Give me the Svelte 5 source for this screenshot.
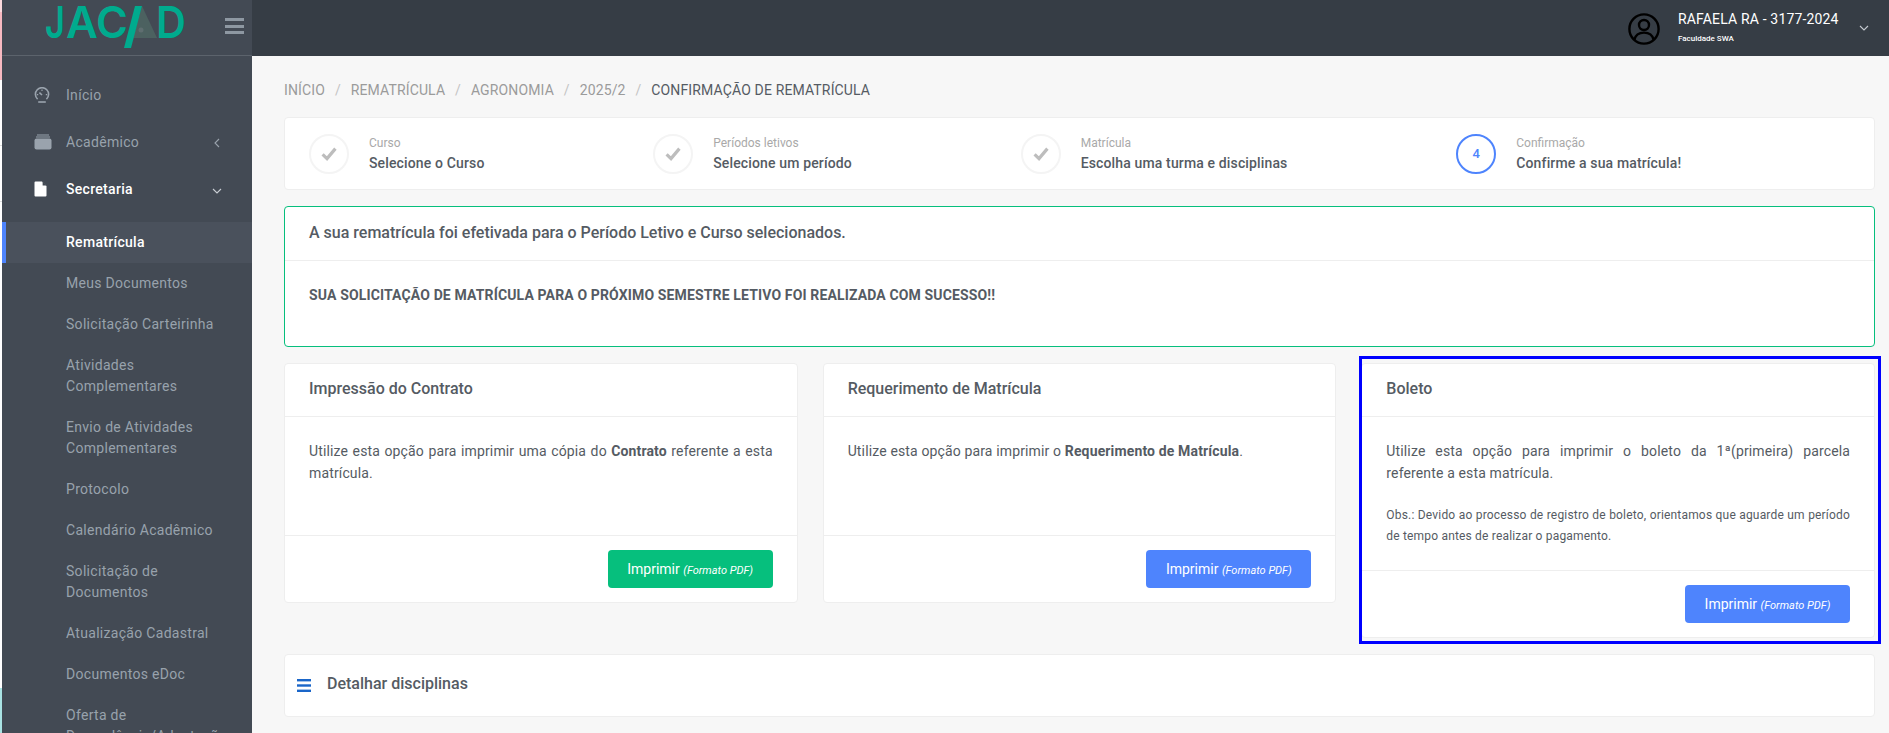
<script>
  const subItems = [
    'Meus Documentos',
    'Solicitação Carteirinha',
    'Atividades Complementares',
    'Envio de Atividades Complementares',
    'Protocolo',
    'Calendário Acadêmico',
    'Solicitação de Documentos',
    'Atualização Cadastral',
    'Documentos eDoc',
    'Oferta de Dependência/Adaptação'
  ];
  const crumbs = ['Início', 'Rematrícula', 'Agronomia', '2025/2'];
  const steps = [
    { label: 'Curso', title: 'Selecione o Curso' },
    { label: 'Períodos letivos', title: 'Selecione um período' },
    { label: 'Matrícula', title: 'Escolha uma turma e disciplinas' },
    { label: 'Confirmação', title: 'Confirme a sua matrícula!', current: 4 }
  ];
</script>

<div class="page">
  <div class="strip"></div>

  <aside class="sidebar">
    <div class="brand">
      <svg class="logo" width="150" height="50" viewBox="0 0 150 50" aria-label="JACAD">
        <text x="0" y="38" class="logo-text" textLength="20" lengthAdjust="spacingAndGlyphs">J</text>
        <text x="21" y="38" class="logo-text" textLength="32" lengthAdjust="spacingAndGlyphs">A</text>
        <text x="51" y="38" class="logo-text" textLength="32" lengthAdjust="spacingAndGlyphs">C</text>
        <polygon points="97,6 112,38 88,38" fill="#4c6160" />
        <circle cx="96" cy="30" r="2.5" fill="#5f6e70" />
        <polygon points="90,6 97,6 86,48 79,48" fill="#00ab8e" />
        <text x="111" y="38" class="logo-text" textLength="30" lengthAdjust="spacingAndGlyphs">D</text>
      </svg>
      <button class="burger" aria-label="Menu"><span></span><span></span><span></span></button>
    </div>

    <nav class="menu">
      <a class="top-item" href="#inicio">
        <svg width="16" height="16" viewBox="0 0 16 16" fill="none" stroke="#9aa3ad" stroke-width="1.6">
          <path d="M3.6 12.2a6.6 6.6 0 1 1 8.8 0" />
          <path d="M4.2 15h7.6" />
          <path d="M8 8 5.4 5.6" />
          <path d="M8 2.6v1.4M2.8 7.6h1.4M11.8 7.6h1.4" stroke-width="1.2" />
        </svg>
        <span>Início</span>
      </a>
      <a class="top-item" href="#academico">
        <svg width="18" height="16" viewBox="0 0 18 16" fill="#9aa3ad">
          <rect x="3" y="0.5" width="12" height="1" />
          <rect x="2" y="2.5" width="14" height="1" />
          <rect x="0.5" y="4.5" width="17" height="11" rx="2" />
        </svg>
        <span>Acadêmico</span>
        <svg class="chev" width="8" height="10" viewBox="0 0 8 10" fill="none" stroke="#9aa3ad" stroke-width="1.1"><path d="M6 1 2 5l4 4" /></svg>
      </a>
      <a class="top-item open" href="#secretaria">
        <svg width="13" height="16" viewBox="0 0 13 16" fill="#fff">
          <path d="M1.5 0.5H8l4.5 4.5v9.5a1 1 0 0 1-1 1h-10a1 1 0 0 1-1-1v-13a1 1 0 0 1 1-1Z" />
          <path d="M8.6 0.6v3.9h3.9" fill="#434a54" />
        </svg>
        <span>Secretaria</span>
        <svg class="chev down" width="10" height="8" viewBox="0 0 10 8" fill="none" stroke="#c9ced4" stroke-width="1.1"><path d="M1 2l4 4 4-4" /></svg>
      </a>

      <a class="sub-item active" href="#rematricula">Rematrícula</a>
      {#each subItems as item}
        <a class="sub-item" href="#item">{item}</a>
      {/each}
    </nav>
  </aside>

  <div class="content">
    <header class="topbar">
      <svg class="avatar" width="32" height="32" viewBox="0 0 32 32" fill="none" stroke="#000" stroke-width="2.4">
        <circle cx="16" cy="16" r="14.6" />
        <circle cx="16" cy="12" r="5" />
        <path d="M6.4 26.6c1.2-5 5-7 9.6-7s8.4 2 9.6 7" />
      </svg>
      <div class="user">
        <div class="user-name">RAFAELA RA - 3177-2024</div>
        <div class="user-org">Faculdade SWA</div>
      </div>
      <svg class="user-chev" width="10" height="8" viewBox="0 0 10 8" fill="none" stroke="#c5cad0" stroke-width="1.1"><path d="M1 2l4 4 4-4" /></svg>
    </header>

    <main class="main">
      <ol class="breadcrumb">
        {#each crumbs as crumb}
          <li>{crumb}</li>
        {/each}
        <li class="current">Confirmação de Rematrícula</li>
      </ol>

      <section class="panel stepper">
        {#each steps as step}
          <div class="step">
            <div class="step-circle" class:current={step.current}>
              {#if step.current}
                {step.current}
              {:else}
                <svg width="16" height="14" viewBox="0 0 16 14" fill="none" stroke="#bdbdbd" stroke-width="3.2"><path d="M1.6 7.4 6 11.6l8.4-10" /></svg>
              {/if}
            </div>
            <div>
              <div class="step-label">{step.label}</div>
              <div class="step-title">{step.title}</div>
            </div>
          </div>
        {/each}
      </section>

      <section class="panel success">
        <h2 class="success-head">A sua rematrícula foi efetivada para o Período Letivo e Curso selecionados.</h2>
        <div class="success-body">SUA SOLICITAÇÃO DE MATRÍCULA PARA O PRÓXIMO SEMESTRE LETIVO FOI REALIZADA COM SUCESSO!!</div>
      </section>

      <div class="cards">
        <article class="panel card">
          <h3 class="card-head">Impressão do Contrato</h3>
          <div class="card-body">
            <p>Utilize esta opção para imprimir uma cópia do <strong>Contrato</strong> referente a esta matrícula.</p>
          </div>
          <div class="card-foot"><button class="btn green">Imprimir <em>(Formato PDF)</em></button></div>
        </article>

        <article class="panel card">
          <h3 class="card-head">Requerimento de Matrícula</h3>
          <div class="card-body">
            <p>Utilize esta opção para imprimir o <strong>Requerimento de Matrícula</strong>.</p>
          </div>
          <div class="card-foot"><button class="btn blue">Imprimir <em>(Formato PDF)</em></button></div>
        </article>

        <article class="panel card marked">
          <h3 class="card-head">Boleto</h3>
          <div class="card-body">
            <p>Utilize esta opção para imprimir o boleto da 1ª(primeira) parcela referente a esta matrícula.</p>
            <p class="note">Obs.: Devido ao processo de registro de boleto, orientamos que aguarde um período de tempo antes de realizar o pagamento.</p>
          </div>
          <div class="card-foot"><button class="btn blue">Imprimir <em>(Formato PDF)</em></button></div>
        </article>
      </div>

      <section class="panel details">
        <svg width="14" height="13" viewBox="0 0 14 13" fill="#1a66c9">
          <rect width="14" height="2.4" />
          <rect y="5.3" width="14" height="2.4" />
          <rect y="10.6" width="14" height="2.4" />
        </svg>
        <h3>Detalhar disciplinas</h3>
      </section>
    </main>
  </div>
</div>

<style>
  :global(body) {
    margin: 0;
    background: #f7f7f7;
    overflow: hidden;
  }

  .page {
    display: flex;
    height: 733px;
    overflow: hidden;
    font-family: Roboto, "Liberation Sans", sans-serif;
    font-size: 14px;
    color: #555b63;
    letter-spacing: 0.14px;
  }

  .strip {
    flex: 0 0 2px;
    background: linear-gradient(to bottom, #fbd9dd 0 12px, #f7b9c1 12px 80px, #fff 80px 145px, #ddd 145px 146px, #fff 146px 201px, #ddd 201px 202px, #fff 202px 688px, #a9e3e3 688px);
  }

  /* sidebar */
  .sidebar {
    flex: 0 0 250px;
    background: #434a54;
    overflow: hidden;
  }

  .brand {
    height: 55px;
    border-bottom: 1px solid #5c636c;
    display: flex;
    align-items: flex-start;
    padding-left: 43px;
    gap: 30px;
  }

  .logo {
    display: block;
    flex: none;
  }

  .logo-text {
    font-family: Inter, sans-serif;
    font-weight: 600;
    font-size: 44px;
    fill: #00ab8e;
  }

  .burger {
    display: flex;
    flex-direction: column;
    gap: 3.5px;
    width: 19px;
    padding: 0;
    margin-top: 18px;
    border: 0;
    background: none;
  }

  .burger span {
    display: block;
    height: 3px;
    background: #8e98a2;
  }

  .menu {
    display: flex;
    flex-direction: column;
    padding-top: 15.5px;
  }

  .menu a {
    text-decoration: none;
  }

  .top-item {
    display: flex;
    align-items: center;
    flex: 0 0 47px;
    padding-left: 32px;
    color: #98a2ac;
    letter-spacing: 0.3px;
    position: relative;
  }

  .top-item svg:first-child {
    flex: none;
    margin-right: 0;
  }

  .top-item span {
    position: absolute;
    left: 64px;
  }

  .top-item.open {
    color: #fff;
    font-weight: 500;
    margin-bottom: 9.5px;
  }

  .chev {
    position: absolute;
    left: 211px;
    top: 19px;
  }

  .chev.down {
    left: 210px;
    top: 21px;
  }

  .sub-item {
    display: block;
    padding: 10px 30px 10px 64px;
    line-height: 21px;
    color: #98a2ac;
    letter-spacing: 0.3px;
  }

  .sub-item.active {
    background: #4a515c;
    border-left: 4px solid #4e84fd;
    padding-left: 60px;
    color: #fff;
    font-weight: 500;
  }

  /* top bar */
  .content {
    flex: 1;
    min-width: 0;
    display: flex;
    flex-direction: column;
  }

  .topbar {
    flex: 0 0 56px;
    background: #363d45;
    display: flex;
    align-items: flex-start;
    justify-content: flex-end;
    padding-right: 20px;
    box-sizing: border-box;
  }

  .avatar {
    margin-top: 13px;
  }

  .user {
    width: 181px;
    margin-left: 18px;
    color: #fff;
  }

  .user-name {
    margin-top: 10px;
    font-size: 14px;
    line-height: 18px;
    letter-spacing: 0.16px;
  }

  .user-org {
    margin-top: 2px;
    font-size: 8px;
    font-weight: 500;
    line-height: 18px;
    letter-spacing: 0;
  }

  .user-chev {
    margin-top: 24px;
  }

  /* main */
  .main {
    flex: 1;
    padding: 0 14px 0 32px;
  }

  .breadcrumb {
    display: flex;
    list-style: none;
    margin: 0;
    padding: 25px 0 0;
    height: 36px;
    box-sizing: content-box;
    line-height: 18px;
    text-transform: uppercase;
    color: #9b9b9b;
  }

  .breadcrumb li:not(.current)::after {
    content: "/";
    margin: 0 9.9px;
    color: #c4c4c4;
  }

  .breadcrumb li.current {
    color: #555b63;
  }

  .panel {
    background: #fff;
    border: 1px solid #eee;
    border-radius: 4px;
    box-sizing: border-box;
  }

  .stepper {
    display: flex;
    height: 73px;
    padding: 0 24px;
    align-items: center;
  }

  .step {
    flex: 1 1 auto;
    display: flex;
    align-items: center;
    gap: 20px;
  }

  .step-circle {
    width: 40px;
    height: 40px;
    box-sizing: border-box;
    border: 2px solid #f4f4f4;
    border-radius: 50%;
    display: flex;
    align-items: center;
    justify-content: center;
  }

  .step-circle.current {
    border-color: #4e84fd;
    color: #4e84fd;
    font-weight: 500;
    font-size: 13px;
  }

  .step-label {
    font-size: 12px;
    line-height: 18px;
    color: #a9a9a9;
    letter-spacing: 0;
  }

  .step-title {
    margin-top: 1px;
    font-weight: 500;
    line-height: 20px;
    color: #555b63;
  }

  .success {
    margin-top: 16px;
    height: 141px;
    border-color: #06bf7d;
  }

  .success-head {
    margin: 0;
    height: 54px;
    padding: 0 24px;
    line-height: 52px;
    font-size: 16px;
    font-weight: 500;
    letter-spacing: 0;
    border-bottom: 1px solid #eee;
    box-sizing: border-box;
  }

  .success-body {
    padding: 23px 24px 0;
    line-height: 22px;
    font-weight: 700;
  }

  .cards {
    display: grid;
    grid-template-columns: repeat(3, 1fr);
    gap: 25px;
    align-items: start;
    margin-top: 16px;
  }

  .card-head {
    margin: 0;
    height: 53px;
    padding: 0 24px;
    line-height: 50px;
    font-size: 16px;
    font-weight: 500;
    letter-spacing: 0;
    border-bottom: 1px solid #eee;
    box-sizing: border-box;
  }

  .card-body {
    min-height: 118px;
    box-sizing: border-box;
    padding: 24px 24px 2px;
    line-height: 21.5px;
    text-align: justify;
  }

  .card-body p {
    margin: 0 0 21px;
  }

  .card-body .note {
    font-size: 12px;
    line-height: 21px;
    letter-spacing: 0.18px;
  }

  .card-foot {
    display: flex;
    justify-content: flex-end;
    border-top: 1px solid #eee;
    padding: 14px 24px;
  }

  .btn {
    width: 165px;
    height: 38px;
    padding: 0;
    border: 0;
    border-radius: 4px;
    color: #fff;
    font-family: inherit;
    font-size: 14px;
  }

  .btn em {
    font-size: 11px;
  }

  .green {
    background: #06bf7d;
  }

  .blue {
    background: #4e84fd;
  }

  /* blue marker drawn over the third card */
  .marked {
    position: relative;
  }

  .marked::after {
    content: "";
    position: absolute;
    inset: -8px -7px -7px -3px;
    border: 3px solid #0000ff;
    pointer-events: none;
  }

  .details {
    display: flex;
    align-items: center;
    gap: 16px;
    height: 63px;
    margin-top: 16px;
    padding: 0 12px;
  }

  .details h3 {
    margin: 0;
    padding-bottom: 4px;
    font-size: 16px;
    font-weight: 500;
    letter-spacing: 0;
  }
</style>
